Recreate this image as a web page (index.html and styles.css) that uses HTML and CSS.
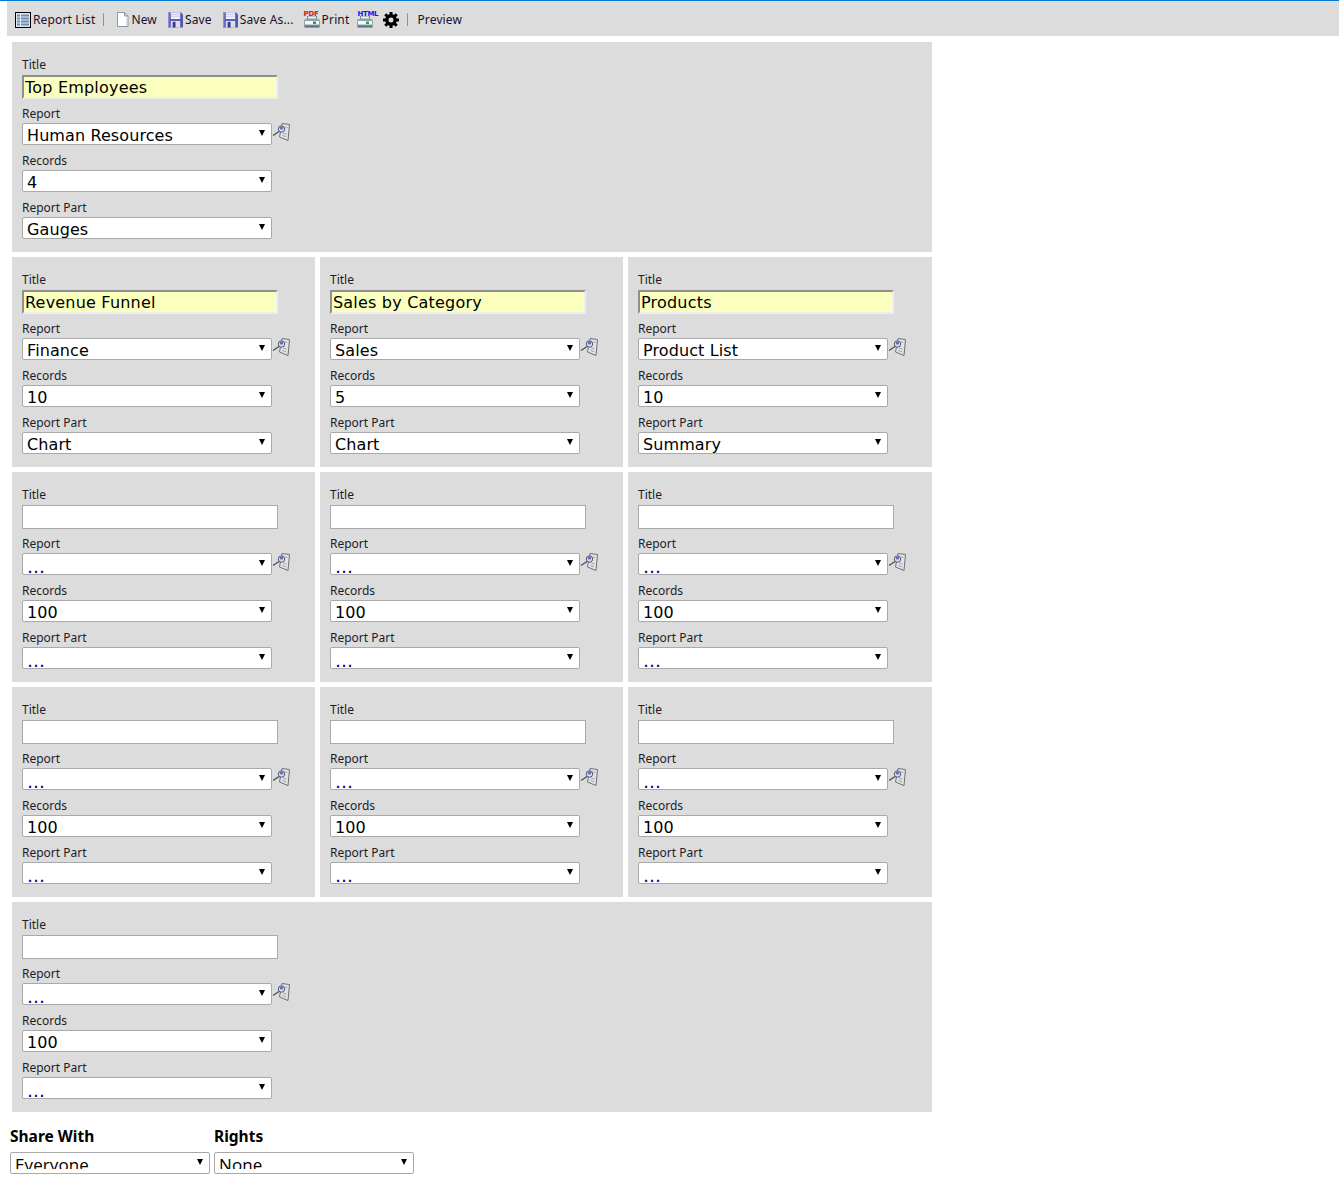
FILE: index.html
```html
<!DOCTYPE html>
<html lang="en">
<head>
  <meta charset="UTF-8" />
  <title>Dashboard Designer</title>
  <link rel="stylesheet" href="styles.css">
</head>
<body>
  <svg class="defs" width="0" height="0">
    <symbol id="i-list" viewBox="0 0 16 16">
      <rect x="0.5" y="0.5" width="15" height="15" fill="#dfe6ef" stroke="#000"/>
      <path d="M2 3.500h12M2 6.500h12M2 9.500h12M2 12.500h12" stroke="#6f8fb5" stroke-width="2"/>
      <path d="M5.500 2v12" stroke="#e8eef5"/>
    </symbol>
    <symbol id="i-new" viewBox="0 0 13 15">
      <path d="M1.500 0.500h7l3.500 3.500v10.500h-10.500z" fill="#fff" stroke="#8a98a8"/>
      <path d="M8.500 0.500v3.500h3.500z" fill="#d5dde6" stroke="#8a98a8"/>
      <path d="M10.500 6v8" stroke="#d8dfe8"/>
    </symbol>
    <symbol id="i-save" viewBox="0 0 16 16">
      <path d="M0 0h14l2 2v14h-16z" fill="#5458b4"/>
      <rect x="3" y="0" width="10" height="7" fill="#f0f1f8"/>
      <path d="M3 2h10M3 4h10" stroke="#c9cce6"/>
      <rect x="3" y="9" width="10" height="7" fill="#dcdde8"/>
      <rect x="5" y="10" width="3" height="6" fill="#34388c"/>
      <path d="M0 0h1.500v16h-1.500z" fill="#8a8fd6"/>
    </symbol>
    <symbol id="i-printer" viewBox="0 0 16 12">
      <rect x="3.500" y="0" width="9" height="3" fill="#f2f4f6" stroke="#7b8894"/>
      <path d="M1 3h14l1 1.500v6a1.500 1.500 0 0 1-1.500 1.500h-13a1.500 1.500 0 0 1-1.500-1.500v-6z" fill="#93a1ae"/>
      <rect x="1" y="5" width="14" height="3.500" fill="#f4f6f8"/>
      <rect x="9" y="5.500" width="3" height="2.500" fill="#0fb52a"/>
      <rect x="1" y="9.500" width="14" height="1.500" fill="#5f6e7b"/>
    </symbol>
    <symbol id="i-gear" viewBox="0 0 16 16">
      <circle cx="8" cy="8" r="4.200" fill="none" stroke="#000" stroke-width="3.400"/>
      <g stroke="#000" stroke-width="3">
        <path d="M8 0v3M8 13v3M0 8h3M13 8h3"/>
        <path d="M2.300 2.300l2.200 2.200M11.500 11.500l2.200 2.200M13.700 2.300l-2.200 2.200M4.500 11.500l-2.200 2.200"/>
      </g>
    </symbol>
    <symbol id="i-lookup" viewBox="0 0 18 18">
      <path d="M10 .5l7.500 1-1.500 16-8.500-3.500z" fill="#e1e2e6" stroke="#6d7078"/>
      <path d="M11 10l3.500 1M10.500 12.500l3.500 1.200M13 4l2.500.4" stroke="#a2a5ad"/>
      <circle cx="9.500" cy="6" r="3.200" fill="#d9def2" stroke="#565a66"/>
      <path d="M7.500 4.500a3 3 0 0 1 4 0l-1 2h-2z" fill="#5f68c4"/>
      <path d="M7 8.500l-6 4" stroke="#4f535c" stroke-width="1.500"/>
    </symbol>
  </svg>

  <div class="toolbar">
    <a class="tool tool-list"><svg class="ico-16"><use href="#i-list"/></svg>Report List</a>
    <span class="sep"></span>
    <a class="tool"><svg class="ico-new"><use href="#i-new"/></svg>New</a>
    <a class="tool"><svg class="ico-save"><use href="#i-save"/></svg>Save</a>
    <a class="tool tool-saveas"><svg class="ico-save"><use href="#i-save"/></svg>Save As...</a>
    <a class="tool tool-print"><span class="ico-print"><b class="print-tag pdf">PDF</b><svg class="ico-printer"><use href="#i-printer"/></svg></span>Print</a>
    <a class="tool tool-html"><span class="ico-print"><b class="print-tag html">HTML</b><svg class="ico-printer"><use href="#i-printer"/></svg></span></a>
    <a class="tool tool-gear"><svg class="ico-16"><use href="#i-gear"/></svg></a>
    <span class="sep sep-last"></span>
    <a class="tool tool-preview">Preview</a>
  </div>

  <div class="rows">
    <div class="row">
      <div class="panel panel-wide">
        <label>Title</label>
        <input class="title-input filled" type="text" value="Top Employees">
        <label>Report</label>
        <div class="line">
          <div class="pick"><select><option>Human Resources</option></select></div>
          <svg class="lookup"><use href="#i-lookup"/></svg>
        </div>
        <label>Records</label>
        <div class="pick"><select><option>4</option></select></div>
        <label>Report Part</label>
        <div class="pick"><select><option>Gauges</option></select></div>
      </div>
    </div>

    <div class="row">
      <div class="panel">
        <label>Title</label>
        <input class="title-input filled" type="text" value="Revenue Funnel">
        <label>Report</label>
        <div class="line">
          <div class="pick"><select><option>Finance</option></select></div>
          <svg class="lookup"><use href="#i-lookup"/></svg>
        </div>
        <label>Records</label>
        <div class="pick"><select><option>10</option></select></div>
        <label>Report Part</label>
        <div class="pick"><select><option>Chart</option></select></div>
      </div>
      <div class="panel">
        <label>Title</label>
        <input class="title-input filled" type="text" value="Sales by Category">
        <label>Report</label>
        <div class="line">
          <div class="pick"><select><option>Sales</option></select></div>
          <svg class="lookup"><use href="#i-lookup"/></svg>
        </div>
        <label>Records</label>
        <div class="pick"><select><option>5</option></select></div>
        <label>Report Part</label>
        <div class="pick"><select><option>Chart</option></select></div>
      </div>
      <div class="panel">
        <label>Title</label>
        <input class="title-input filled" type="text" value="Products">
        <label>Report</label>
        <div class="line">
          <div class="pick"><select><option>Product List</option></select></div>
          <svg class="lookup"><use href="#i-lookup"/></svg>
        </div>
        <label>Records</label>
        <div class="pick"><select><option>10</option></select></div>
        <label>Report Part</label>
        <div class="pick"><select><option>Summary</option></select></div>
      </div>
    </div>

    <div class="row">
      <div class="panel">
        <label>Title</label>
        <input class="title-input" type="text">
        <label>Report</label>
        <div class="line">
          <div class="pick"><select class="empty"><option>…</option></select></div>
          <svg class="lookup"><use href="#i-lookup"/></svg>
        </div>
        <label>Records</label>
        <div class="pick"><select><option>100</option></select></div>
        <label>Report Part</label>
        <div class="pick"><select class="empty"><option>…</option></select></div>
      </div>
      <div class="panel">
        <label>Title</label>
        <input class="title-input" type="text">
        <label>Report</label>
        <div class="line">
          <div class="pick"><select class="empty"><option>…</option></select></div>
          <svg class="lookup"><use href="#i-lookup"/></svg>
        </div>
        <label>Records</label>
        <div class="pick"><select><option>100</option></select></div>
        <label>Report Part</label>
        <div class="pick"><select class="empty"><option>…</option></select></div>
      </div>
      <div class="panel">
        <label>Title</label>
        <input class="title-input" type="text">
        <label>Report</label>
        <div class="line">
          <div class="pick"><select class="empty"><option>…</option></select></div>
          <svg class="lookup"><use href="#i-lookup"/></svg>
        </div>
        <label>Records</label>
        <div class="pick"><select><option>100</option></select></div>
        <label>Report Part</label>
        <div class="pick"><select class="empty"><option>…</option></select></div>
      </div>
    </div>

    <div class="row">
      <div class="panel">
        <label>Title</label>
        <input class="title-input" type="text">
        <label>Report</label>
        <div class="line">
          <div class="pick"><select class="empty"><option>…</option></select></div>
          <svg class="lookup"><use href="#i-lookup"/></svg>
        </div>
        <label>Records</label>
        <div class="pick"><select><option>100</option></select></div>
        <label>Report Part</label>
        <div class="pick"><select class="empty"><option>…</option></select></div>
      </div>
      <div class="panel">
        <label>Title</label>
        <input class="title-input" type="text">
        <label>Report</label>
        <div class="line">
          <div class="pick"><select class="empty"><option>…</option></select></div>
          <svg class="lookup"><use href="#i-lookup"/></svg>
        </div>
        <label>Records</label>
        <div class="pick"><select><option>100</option></select></div>
        <label>Report Part</label>
        <div class="pick"><select class="empty"><option>…</option></select></div>
      </div>
      <div class="panel">
        <label>Title</label>
        <input class="title-input" type="text">
        <label>Report</label>
        <div class="line">
          <div class="pick"><select class="empty"><option>…</option></select></div>
          <svg class="lookup"><use href="#i-lookup"/></svg>
        </div>
        <label>Records</label>
        <div class="pick"><select><option>100</option></select></div>
        <label>Report Part</label>
        <div class="pick"><select class="empty"><option>…</option></select></div>
      </div>
    </div>

    <div class="row">
      <div class="panel panel-wide">
        <label>Title</label>
        <input class="title-input" type="text">
        <label>Report</label>
        <div class="line">
          <div class="pick"><select class="empty"><option>…</option></select></div>
          <svg class="lookup"><use href="#i-lookup"/></svg>
        </div>
        <label>Records</label>
        <div class="pick"><select><option>100</option></select></div>
        <label>Report Part</label>
        <div class="pick"><select class="empty"><option>…</option></select></div>
      </div>
    </div>
  </div>

  <div class="share">
    <div class="share-col">
      <h4>Share With</h4>
      <div class="pick pick-share"><select class="plain"><option>Everyone</option></select></div>
    </div>
    <div class="share-col">
      <h4>Rights</h4>
      <div class="pick pick-share"><select class="plain"><option>None</option></select></div>
    </div>
  </div>
</body>
</html>
```
FILE: styles.css
```css
* { box-sizing: border-box; }
body {
  margin: 0;
  background: #fff;
  border-top: 1px solid #0078d7;
  font-family: 'Noto Sans', sans-serif;
  color: #000;
}
.defs { position: absolute; }

.toolbar {
  margin-left: 7px;
  height: 35px;
  background: #dcdcdc;
  display: flex;
  align-items: center;
  padding: 2px 0 0 8px;
  font-size: 12px;
  letter-spacing: 0.15px;
  color: #1a1030;
}
.tool {
  display: flex;
  align-items: center;
  gap: 2px;
  margin-right: 11px;
  white-space: nowrap;
}
.tool-list { margin-right: 8px; }
.tool-saveas { margin-right: 10px; }
.tool-print { margin-right: 8px; }
.tool-html { margin-right: 10px; }
.tool-gear { margin-right: 8px; }
.tool-preview { margin-right: 0; }
.ico-16 { width: 16px; height: 16px; }
.ico-save { width: 15px; height: 16px; }
.ico-new { width: 13px; height: 15px; }
.sep {
  width: 1px;
  height: 13px;
  background: #a08a9a;
  margin-right: 12px;
}
.sep-last { margin-right: 9px; }
.ico-print {
  position: relative;
  display: block;
  width: 16px;
  height: 17px;
}
.ico-printer {
  position: absolute;
  left: 0;
  bottom: 0;
  width: 16px;
  height: 12px;
}
.print-tag {
  position: absolute;
  left: 0;
  top: -1px;
  font: bold 7px/8px 'DejaVu Sans', sans-serif;
  letter-spacing: -0.3px;
  z-index: 1;
}
.print-tag.pdf { color: #e01010; }
.print-tag.html { color: #1414f0; }

.rows {
  margin: 6px 0 0 12px;
  width: 920px;
  display: flex;
  flex-direction: column;
  gap: 5px;
}
.row {
  display: flex;
  gap: 5px;
}
.panel {
  flex: 0 0 303px;
  height: 210px;
  background: #dcdcdc;
  padding: 15px 10px 0;
}
.panel:last-child { flex: 1; }
.panel label {
  display: block;
  font-size: 12px;
  line-height: 16px;
  color: #1c1c28;
}
.title-input {
  display: block;
  width: 256px;
  height: 24px;
  margin: 2px 0 7px;
  padding: 0 2px;
  background: #fff;
  border: 1px solid #a9a9a9;
  font: 16px 'DejaVu Sans', sans-serif;
  letter-spacing: 0.2px;
  color: #000;
}
.title-input.filled {
  background: #fbffbe;
  border: 2px solid;
  border-color: #8f8f8f #eeeeee #eeeeee #8f8f8f;
  padding: 0 1px;
}
.line {
  display: flex;
  align-items: flex-start;
}
.pick {
  position: relative;
  width: 250px;
  height: 22px;
  margin: 1px 0 8px;
}
.pick::after {
  content: "";
  position: absolute;
  right: 7px;
  top: 7px;
  border-top: 6px solid #000;
  border-left: 3px solid transparent;
  border-right: 3px solid transparent;
  pointer-events: none;
}
.pick select {
  appearance: none;
  width: 100%;
  height: 100%;
  padding: 2px 20px 0 4px;
  background: #fff;
  border: 1px solid #a9a9a9;
  border-radius: 2px;
  font: 16px 'DejaVu Sans', sans-serif;
  letter-spacing: 0.1px;
  color: #000;
}
.pick select.empty {
  color: #000080;
  font-size: 18px;
}
.pick select.plain {
  padding: 0 20px 4px 4px;
  font-family: 'Open Sans', sans-serif;
  font-size: 17px;
}
.lookup {
  width: 18px;
  height: 18px;
  margin-top: 1px;
}

.share {
  display: flex;
  gap: 4px;
  margin: 14px 0 0 10px;
}
.share-col h4 {
  margin: 0;
  font-size: 15.500px;
  line-height: 20px;
  font-weight: bold;
}
.pick-share {
  width: 200px;
  margin: 6px 0 0;
}
```
